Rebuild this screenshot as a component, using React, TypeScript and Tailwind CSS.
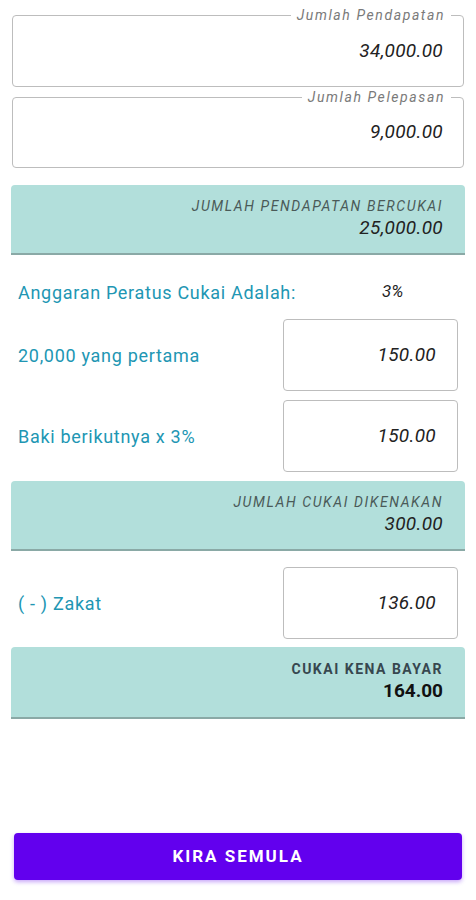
import React from "react"

const font = { fontFamily: "Roboto, 'Noto Sans', sans-serif" }

function Outlined({ label, value, className }: { label: string; value: string; className: string }) {
  return (
    <div className={`relative mx-px rounded-[4px] border border-[#bdbdbd] flex items-center justify-end pr-[20px] ${className}`}>
      <span className="absolute right-[12px] -top-[10px] bg-white px-[6px] text-[14px] leading-[18px] italic tracking-[1.6px] text-[#7a7a7a]">
        {label}
      </span>
      <span className="text-[19px] italic text-[#222] tracking-[0.3px]">{value}</span>
    </div>
  )
}

function Panel({ label, value, bold, className }: { label: string; value: string; bold?: boolean; className: string }) {
  return (
    <div className={`rounded-t-[4px] bg-[#b2dfdb] border-b-2 border-[#8aa9a6] flex flex-col items-end justify-center pr-[22px] ${className}`}>
      {bold ? (
        <>
          <span className="text-[14px] leading-[18px] font-bold tracking-[1.5px] text-[#37474f]">{label}</span>
          <span className="text-[19px] leading-[26px] font-bold text-[#111]">{value}</span>
        </>
      ) : (
        <>
          <span className="text-[14px] leading-[18px] italic tracking-[1.6px] text-[#4a5a58]">{label}</span>
          <span className="text-[19px] leading-[26px] italic text-[#222] tracking-[0.3px]">{value}</span>
        </>
      )}
    </div>
  )
}

function Row({ label, value, className }: { label: string; value: string; className: string }) {
  return (
    <div className={`flex items-center justify-between pl-[7px] pr-[7px] ${className}`}>
      <span className="text-[18px] tracking-[0.7px] text-[#2196b3]">{label}</span>
      <div className="w-[175px] h-[72px] rounded-[4px] border border-[#bdbdbd] flex items-center justify-end pr-[21px]">
        <span className="text-[19px] italic text-[#222] tracking-[0.3px]">{value}</span>
      </div>
    </div>
  )
}

export default function App() {
  return (
    <div style={font} className="w-[476px] h-[900px] bg-white px-[11px] pt-[15px] flex flex-col">
      <Outlined label="Jumlah Pendapatan" value="34,000.00" className="h-[72px]" />
      <Outlined label="Jumlah Pelepasan" value="9,000.00" className="h-[71px] mt-[10px]" />

      <Panel label="JUMLAH PENDAPATAN BERCUKAI" value="25,000.00" className="h-[70px] mt-[17px]" />

      <div className="flex items-center mt-[26px] pl-[7px] h-[22px]">
        <span className="text-[18px] tracking-[0.7px] text-[#2196b3] w-[364px]">Anggaran Peratus Cukai Adalah:</span>
        <span className="text-[17px] italic text-[#222]">3%</span>
      </div>

      <Row label="20,000 yang pertama" value="150.00" className="mt-[16px]" />
      <Row label="Baki berikutnya x 3%" value="150.00" className="mt-[9px]" />

      <Panel label="JUMLAH CUKAI DIKENAKAN" value="300.00" className="h-[70px] mt-[9px]" />

      <Row label="( - ) Zakat" value="136.00" className="mt-[16px]" />

      <Panel label="CUKAI KENA BAYAR" value="164.00" bold className="h-[72px] mt-[8px]" />

      <button className="mt-[114px] mx-[3px] h-[47px] rounded-[4px] bg-[#6200ee] text-white text-[17px] font-bold tracking-[2px] shadow-[0_2px_4px_rgba(98,0,238,0.35)]">
        KIRA SEMULA
      </button>
    </div>
  )
}
